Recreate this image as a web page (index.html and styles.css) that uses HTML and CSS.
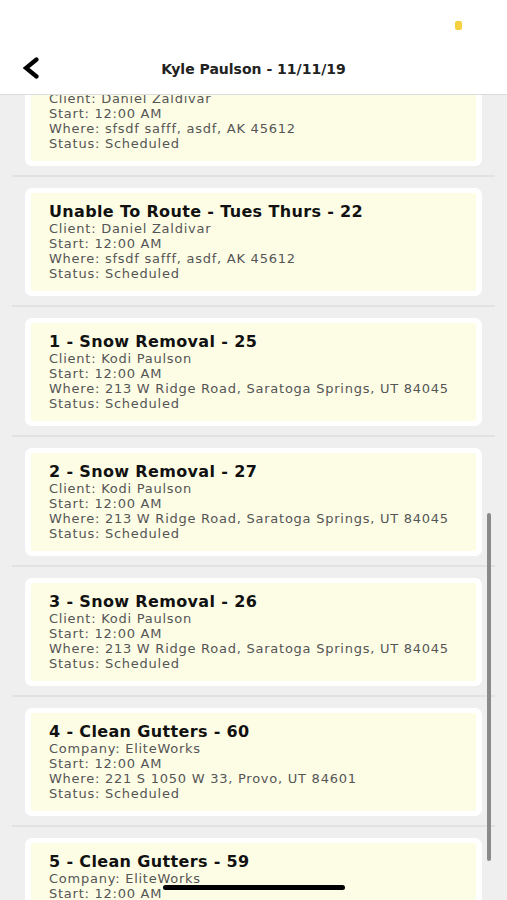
FILE: index.html
```html
<!DOCTYPE html>
<html lang="en">
<head>
    <meta charset="UTF-8">
    <meta name="viewport" content="width=device-width, initial-scale=1.0">
    <title>Kyle Paulson - 11/11/19</title>
    <link rel="stylesheet" href="styles.css">
</head>
<body>
    <div class="screen">
        <div class="header">
            <div class="status-bar">
                <span class="dot"></span>
            </div>
            <div class="nav">
                <svg class="back" width="20" height="22" viewBox="0 0 20 22">
                    <path d="M15.5 2.5 L5 11 L15.5 19.5" fill="none" stroke="#000" stroke-width="4.2" stroke-linejoin="miter" stroke-linecap="round"/>
                </svg>
                <h1>Kyle Paulson - 11/11/19</h1>
            </div>
        </div>

        <div class="list-wrap">
            <div class="list">
                <div class="job">
                    <div class="card">
                        <div class="card-inner">
                            <h2>Unable To Route - Tues Thurs - 21</h2>
                            <p>Client: Daniel Zaldivar</p>
                            <p>Start: 12:00 AM</p>
                            <p>Where: sfsdf safff, asdf, AK 45612</p>
                            <p>Status: Scheduled</p>
                        </div>
                    </div>
                </div>
                <div class="job">
                    <div class="card">
                        <div class="card-inner">
                            <h2>Unable To Route - Tues Thurs - 22</h2>
                            <p>Client: Daniel Zaldivar</p>
                            <p>Start: 12:00 AM</p>
                            <p>Where: sfsdf safff, asdf, AK 45612</p>
                            <p>Status: Scheduled</p>
                        </div>
                    </div>
                </div>
                <div class="job">
                    <div class="card">
                        <div class="card-inner">
                            <h2>1 - Snow Removal - 25</h2>
                            <p>Client: Kodi Paulson</p>
                            <p>Start: 12:00 AM</p>
                            <p>Where: 213 W Ridge Road, Saratoga Springs, UT 84045</p>
                            <p>Status: Scheduled</p>
                        </div>
                    </div>
                </div>
                <div class="job">
                    <div class="card">
                        <div class="card-inner">
                            <h2>2 - Snow Removal - 27</h2>
                            <p>Client: Kodi Paulson</p>
                            <p>Start: 12:00 AM</p>
                            <p>Where: 213 W Ridge Road, Saratoga Springs, UT 84045</p>
                            <p>Status: Scheduled</p>
                        </div>
                    </div>
                </div>
                <div class="job">
                    <div class="card">
                        <div class="card-inner">
                            <h2>3 - Snow Removal - 26</h2>
                            <p>Client: Kodi Paulson</p>
                            <p>Start: 12:00 AM</p>
                            <p>Where: 213 W Ridge Road, Saratoga Springs, UT 84045</p>
                            <p>Status: Scheduled</p>
                        </div>
                    </div>
                </div>
                <div class="job">
                    <div class="card">
                        <div class="card-inner">
                            <h2>4 - Clean Gutters - 60</h2>
                            <p>Company: EliteWorks</p>
                            <p>Start: 12:00 AM</p>
                            <p>Where: 221 S 1050 W 33, Provo, UT 84601</p>
                            <p>Status: Scheduled</p>
                        </div>
                    </div>
                </div>
                <div class="job">
                    <div class="card">
                        <div class="card-inner">
                            <h2>5 - Clean Gutters - 59</h2>
                            <p>Company: EliteWorks</p>
                            <p>Start: 12:00 AM</p>
                            <p>Where: 221 S 1050 W 33, Provo, UT 84601</p>
                            <p>Status: Scheduled</p>
                        </div>
                    </div>
                </div>
            </div>
            <div class="scrollbar"></div>
        </div>
        <div class="home-bar"></div>
    </div>
</body>
</html>
```

FILE: styles.css
```css
body {
    margin: 0;
    font-family: "DejaVu Sans", sans-serif;
    background-color: #efefef;
}
.screen {
    position: relative;
    width: 507px;
    height: 900px;
    overflow: hidden;
    display: flex;
    flex-direction: column;
}
.header {
    position: relative;
    z-index: 2;
    height: 94px;
    background-color: #fff;
    border-bottom: 1px solid #dcdcdc;
    flex-shrink: 0;
}
.status-bar {
    height: 44px;
    display: flex;
    justify-content: flex-end;
    align-items: center;
    padding-right: 45px;
}
.dot {
    width: 7px;
    height: 9px;
    margin-top: 7px;
    border-radius: 2px;
    background-color: #f5d142;
}
.nav {
    position: relative;
    height: 50px;
    display: flex;
    align-items: center;
    justify-content: center;
}
.back {
    position: absolute;
    left: 21px;
    top: 13px;
}
h1 {
    margin: 0;
    margin-top: -1px;
    font-size: 14px;
    font-weight: bold;
    color: #222;
}
.list-wrap {
    position: relative;
    flex: 1;
}
.list {
    margin-top: -48px;
}
.job {
    margin: 0 12px;
    padding: 11px 13px 9px;
    border-bottom: 2px solid #e2e2e2;
}
.card {
    background-color: #fff;
    border-radius: 7px;
    padding: 5px 6px;
}
.card-inner {
    height: 98px;
    box-sizing: border-box;
    background-color: #fdfde6;
    border-radius: 2px;
    padding: 9px 18px;
}
h2 {
    margin: 0;
    font-size: 16px;
    font-weight: bold;
    letter-spacing: 0.35px;
    color: #111;
    line-height: 19px;
}
.card-inner p {
    margin: 0;
    font-size: 13px;
    letter-spacing: 0.75px;
    line-height: 15px;
    color: #555;
}
.scrollbar {
    position: absolute;
    left: 487px;
    top: 418px;
    width: 4px;
    height: 348px;
    border-radius: 2px;
    background-color: #8a8a8a;
}
.home-bar {
    position: absolute;
    left: 163px;
    top: 885px;
    width: 182px;
    height: 5px;
    border-radius: 3px;
    background-color: #000;
}
```
